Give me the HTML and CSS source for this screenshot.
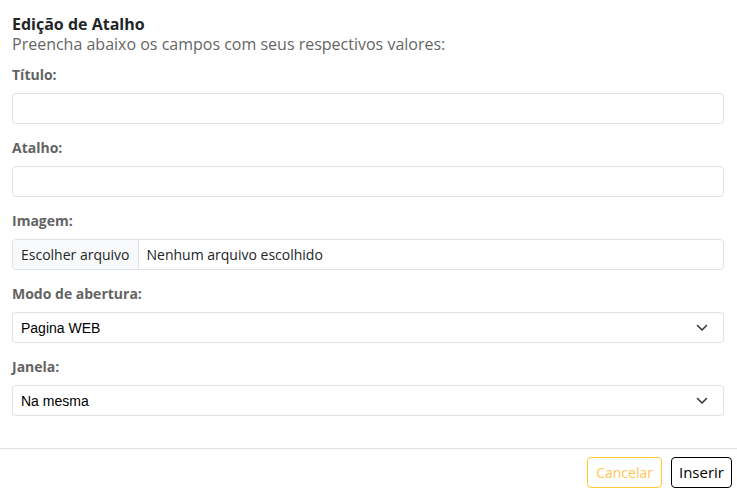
FILE: index.html
```html
<!DOCTYPE html>
<html lang="pt-BR">
<head>
<meta charset="UTF-8">
<meta name="viewport" content="width=device-width, initial-scale=1.0">
<title>Edição de Atalho</title>
<link rel="stylesheet" href="styles.css">
</head>
<body>
<div class="modal">
    <div class="modal-body">
        <h2 class="modal-title">Edição de Atalho</h2>
        <p class="modal-subtitle">Preencha abaixo os campos com seus respectivos valores:</p>

        <div class="field">
            <label for="titulo">Título:</label>
            <input type="text" id="titulo" class="control">
        </div>

        <div class="field">
            <label for="atalho">Atalho:</label>
            <input type="text" id="atalho" class="control">
        </div>

        <div class="field">
            <label>Imagem:</label>
            <div class="file-control">
                <span class="file-button">Escolher arquivo</span>
                <span class="file-name">Nenhum arquivo escolhido</span>
            </div>
        </div>

        <div class="field">
            <label>Modo de abertura:</label>
            <div class="select-control">
                <span>Pagina WEB</span>
                <svg width="12" height="8" viewBox="0 0 12 8"><path d="M1.5 1.5 6 6l4.5-4.5" fill="none" stroke="#343a40" stroke-width="1.6" stroke-linecap="round" stroke-linejoin="round"/></svg>
            </div>
        </div>

        <div class="field">
            <label>Janela:</label>
            <div class="select-control">
                <span>Na mesma</span>
                <svg width="12" height="8" viewBox="0 0 12 8"><path d="M1.5 1.5 6 6l4.5-4.5" fill="none" stroke="#343a40" stroke-width="1.6" stroke-linecap="round" stroke-linejoin="round"/></svg>
            </div>
        </div>
    </div>

    <div class="modal-footer">
        <button class="btn btn-cancel">Cancelar</button>
        <button class="btn btn-insert">Inserir</button>
    </div>
</div>
</body>
</html>
```

FILE: styles.css
```css
body {
    margin: 0;
    font-family: 'Open Sans', sans-serif;
    background: #ffffff;
    color: #212529;
}

.modal-body {
    padding: 14px 13px 18px 12px;
}

.modal-title {
    margin: 0;
    font-size: 16px;
    font-weight: 700;
    line-height: 20px;
    color: #212529;
}

.modal-subtitle {
    margin: 0 0 11px;
    font-size: 16px;
    line-height: 20px;
    color: #666666;
}

.field {
    margin-bottom: 14px;
}

.field label {
    display: block;
    font-size: 14px;
    font-weight: 700;
    line-height: 20px;
    color: #636363;
    margin-bottom: 8px;
}

.control,
.file-control,
.select-control {
    display: flex;
    box-sizing: border-box;
    width: 100%;
    height: 31px;
    border: 1px solid #dee2e6;
    border-radius: 4px;
    background: #ffffff;
}

.control {
    font: inherit;
    padding: 0 8px;
}

.file-control {
    overflow: hidden;
    align-items: stretch;
    font-size: 14px;
    color: #212529;
}

.file-button {
    display: flex;
    align-items: center;
    padding: 0 8px;
    background: #f8f9fa;
    border-right: 1px solid #dee2e6;
}

.file-name {
    display: flex;
    align-items: center;
    padding: 0 8px;
}

.select-control {
    align-items: center;
    justify-content: space-between;
    padding: 0 15px 0 8px;
    font-family: 'Liberation Sans', Arial, sans-serif;
    font-size: 14px;
    color: #000000;
}

.modal-footer {
    display: flex;
    justify-content: flex-end;
    gap: 9px;
    border-top: 1px solid #dee2e6;
    padding: 8px 5px 5px 0;
}

.btn {
    box-sizing: border-box;
    height: 31px;
    border-radius: 4px;
    background: #ffffff;
    font-family: 'Open Sans', sans-serif;
    font-size: 14px;
    line-height: 1;
}

.btn-cancel {
    padding: 0 8px;
    border: 1px solid #ffc933;
    color: #ffc555;
}

.btn-insert {
    padding: 0 7px;
    border: 1px solid #000000;
    color: #000000;
    font-size: 15px;
}
```
